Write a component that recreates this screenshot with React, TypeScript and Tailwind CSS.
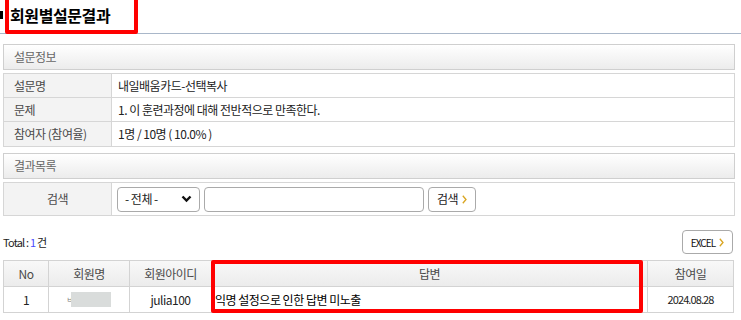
import React from "react";

const font = { fontFamily: "'Noto Sans CJK KR', 'Noto Sans', sans-serif" };

function SectionHeader({ title }: { title: string }) {
  return (
    <div className="flex h-[26px] items-center border border-[#cfcfcf] bg-gradient-to-b from-white to-[#ececec] pl-[10px] text-[12px] text-[#666]">
      {title}
    </div>
  );
}

function InfoRow({ label, value, h }: { label: string; value: React.ReactNode; h: string }) {
  return (
    <div className={`flex ${h} border-b border-[#d6d6d6] last:border-b-0`}>
      <div className="flex w-[108px] shrink-0 items-center border-r border-[#d6d6d6] bg-[#f3f3f3] pl-[10px] text-[#4a4a4a]">
        {label}
      </div>
      <div className="flex items-center pl-[6px] text-[#222]">{value}</div>
    </div>
  );
}

function Arrow() {
  return (
    <svg className="ml-[4px]" width="5" height="9" viewBox="0 0 5 9">
      <path d="M0.8 0.8 L4 4.5 L0.8 8.2" fill="none" stroke="#d9a520" strokeWidth="1.3" />
    </svg>
  );
}

export default function App() {
  return (
    <div
      className="relative h-[320px] w-[741px] overflow-hidden bg-white text-[12px] tracking-[-0.5px]"
      style={font}
    >
      {/* title */}
      <div className="flex h-[34px] items-center border-b border-[#a9b7c9] pb-[3px]">
        <div className="h-[8px] w-[3px] bg-black" />
        <h1 className="ml-[7px] text-[16px] font-bold tracking-[-0.4px] text-black">회원별설문결과</h1>
      </div>

      <div className="ml-[3px] w-[732px]">
        <div className="mt-[10px]">
          <SectionHeader title="설문정보" />
        </div>
        <div className="mt-[3px] border border-[#d6d6d6]">
          <InfoRow h="h-[24px]" label="설문명" value="내일배움카드-선택복사" />
          <InfoRow h="h-[24px]" label="문제" value="1. 이 훈련과정에 대해 전반적으로 만족한다." />
          <InfoRow h="h-[24px]" label="참여자 (참여율)" value="1명 / 10명 ( 10.0% )" />
        </div>

        <div className="mt-[6px]">
          <SectionHeader title="결과목록" />
        </div>
        <div className="mt-[3px] flex h-[34px] border border-[#d6d6d6]">
          <div className="flex w-[108px] shrink-0 items-center justify-center border-r border-[#d6d6d6] bg-[#f3f3f3] text-[#4a4a4a]">
            검색
          </div>
          <div className="flex items-center gap-[4px] pl-[5px]">
            <div className="flex h-[25px] w-[83px] items-center justify-between rounded-[4px] border border-[#aaa] bg-white px-[7px] text-[#222]">
              <span>- 전체 -</span>
              <svg width="11" height="8" viewBox="0 0 11 8">
                <path d="M1.5 1.5 L5.5 5.5 L9.5 1.5" fill="none" stroke="#111" strokeWidth="2.4" />
              </svg>
            </div>
            <div className="h-[25px] w-[220px] rounded-[4px] border border-[#aaa] bg-white" />
            <div className="flex h-[25px] w-[48px] items-center justify-center rounded-[4px] border border-[#aaa] bg-white text-[#222]">
              검색
              <Arrow />
            </div>
          </div>
        </div>

        <div className="mt-[14px] flex h-[24px] items-center justify-between">
          <div className="text-[11px] tracking-[-0.8px] text-[#222]">
            Total : <span className="text-[#4a4aff]">1</span> 건
          </div>
          <div className="mr-[2px] flex h-[24px] w-[51px] items-center justify-center rounded-[4px] border border-[#aaa] bg-white text-[10px] tracking-[-0.9px] text-[#111]">
            EXCEL
            <Arrow />
          </div>
        </div>

        <table className="mt-[6px] w-[730px] table-fixed border-collapse text-center">
          <colgroup>
            <col className="w-[45px]" />
            <col className="w-[81px]" />
            <col className="w-[82px]" />
            <col className="w-[436px]" />
            <col className="w-[86px]" />
          </colgroup>
          <thead>
            <tr className="h-[26px] bg-gradient-to-b from-[#f8f8f8] to-[#ebebeb] text-[#4a4a4a]">
              <th className="border border-[#d3d3d3] font-normal">No</th>
              <th className="border border-[#d3d3d3] font-normal">회원명</th>
              <th className="border border-[#d3d3d3] font-normal">회원아이디</th>
              <th className="border border-[#d3d3d3] font-normal">답변</th>
              <th className="border border-[#d3d3d3] font-normal">참여일</th>
            </tr>
          </thead>
          <tbody>
            <tr className="h-[26px] text-[#222]">
              <td className="border border-[#d3d3d3]">1</td>
              <td className="border border-[#d3d3d3]">
                <div className="flex items-center justify-center">
                  <span className="mr-[-1px] text-[7px] leading-none text-[#777]">ㅂ</span>
                  <span className="inline-block h-[15px] w-[40px] bg-[#d9dcdb]" />
                </div>
              </td>
              <td className="border border-[#d3d3d3]">julia100</td>
              <td className="border border-[#d3d3d3] pl-[3px] text-left text-black">익명 설정으로 인한 답변 미노출</td>
              <td className="border border-[#d3d3d3] text-[11px] tracking-[-0.9px]">2024.08.28</td>
            </tr>
          </tbody>
        </table>
      </div>

      {/* annotation boxes */}
      <div className="absolute left-[5px] top-[-4px] h-[38px] w-[133px] rounded-[2px] border-[4px] border-[#ff0000]" />
      <div className="absolute left-[211px] top-[260px] h-[53px] w-[432px] rounded-[2px] border-[4px] border-[#ff0000]" />
    </div>
  );
}
